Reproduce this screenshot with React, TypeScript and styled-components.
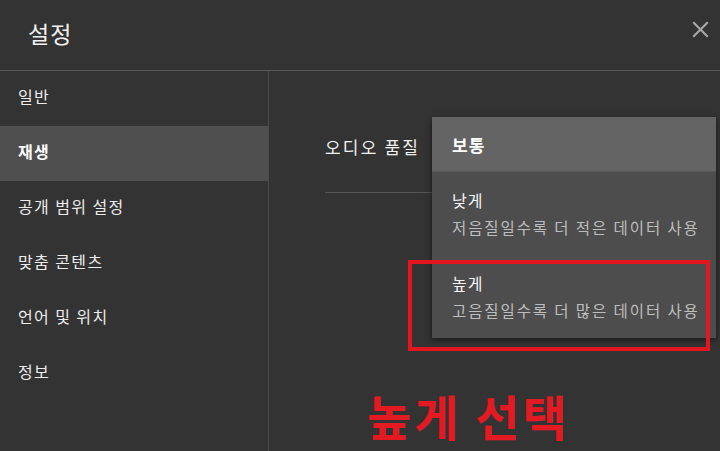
import React from "react";
import styled, { createGlobalStyle } from "styled-components";

const Global = createGlobalStyle`
  html, body { margin: 0; padding: 0; background: #333333; }
  body { font-family: "Noto Sans CJK KR", "Noto Sans", sans-serif; color: #fff; }
  #root { width: 720px; height: 451px; overflow: hidden; }
`;

const Page = styled.div`
  width: 720px;
  height: 451px;
  background: #333333;
  display: flex;
  flex-direction: column;
`;

const Header = styled.header`
  height: 70px;
  flex: none;
  display: flex;
  align-items: center;
  justify-content: space-between;
  padding: 0 10px 0 28px;
  border-bottom: 1px solid #585858;
  box-sizing: content-box;
`;

const Title = styled.h1`
  margin: 0;
  font-size: 23px;
  font-weight: 400;
  color: #f2f2f2;
  letter-spacing: 1px;
  padding-bottom: 5px;
`;

const CloseButton = styled.button`
  background: none;
  border: none;
  padding: 0;
  width: 20px;
  height: 20px;
  margin-top: -12px;
  display: flex;
  align-items: center;
  justify-content: center;
`;

const Body = styled.div`
  flex: 1;
  display: flex;
`;

const Sidebar = styled.nav`
  width: 268px;
  flex: none;
  border-right: 1px solid #4a4a4a;
  display: flex;
  flex-direction: column;
`;

const NavItem = styled.div<{ $active?: boolean }>`
  height: 55px;
  display: flex;
  align-items: center;
  padding: 0 0 5px 18px;
  box-sizing: border-box;
  font-size: 16px;
  font-weight: ${(p) => (p.$active ? 700 : 400)};
  color: ${(p) => (p.$active ? "#ffffff" : "#ececec")};
  background: ${(p) => (p.$active ? "#4f4f4f" : "transparent")};
  letter-spacing: 1.4px;
`;

const Content = styled.section`
  flex: 1;
  position: relative;
  padding: 33px 20px 0 56px;
`;

const Row = styled.div`
  height: 89px;
  display: flex;
  align-items: center;
  border-bottom: 1px solid #555555;
  box-sizing: border-box;
`;

const Label = styled.span`
  font-size: 17px;
  color: #f0f0f0;
  letter-spacing: 2.2px;
  padding-bottom: 3px;
`;

const Menu = styled.div`
  position: absolute;
  left: 163px;
  top: 46px;
  width: 284px;
  background: #4d4d4d;
  box-shadow: 0 2px 6px rgba(0, 0, 0, 0.55);
`;

const MenuHeader = styled.div`
  height: 55px;
  display: flex;
  align-items: center;
  padding-left: 20px;
  background: #646464;
  border-bottom: 1px solid #5a5a5a;
  box-sizing: border-box;
  font-size: 17px;
  font-weight: 700;
  color: #ffffff;
  letter-spacing: 1px;
`;

const MenuItem = styled.div`
  padding: 16px 20px;
  display: flex;
  flex-direction: column;
  gap: 3px;
`;

const ItemTitle = styled.span`
  font-size: 16px;
  line-height: 24px;
  color: #f4f4f4;
  letter-spacing: 1px;
`;

const ItemSub = styled.span`
  font-size: 15.5px;
  line-height: 24px;
  color: #bdbdbd;
  letter-spacing: 1.9px;
  white-space: nowrap;
`;

const Highlight = styled.div`
  position: absolute;
  left: 139px;
  top: 189px;
  width: 302px;
  height: 91px;
  border: 4px solid #e3161f;
  box-sizing: border-box;
  pointer-events: none;
`;

const Annotation = styled.div`
  position: absolute;
  left: 98px;
  top: 313px;
  font-size: 48px;
  line-height: 62px;
  font-weight: 700;
  color: #e31a22;
  letter-spacing: 3px;
  white-space: nowrap;
`;

const navItems = ["일반", "재생", "공개 범위 설정", "맞춤 콘텐츠", "언어 및 위치", "정보"];

export default function App() {
  return (
    <>
      <Global />
      <Page>
        <Header>
          <Title>설정</Title>
          <CloseButton aria-label="닫기">
            <svg width="17" height="17" viewBox="0 0 17 17">
              <path d="M2 2 L15 15 M15 2 L2 15" stroke="#a6a6a6" strokeWidth="2.2" strokeLinecap="square" />
            </svg>
          </CloseButton>
        </Header>
        <Body>
          <Sidebar>
            {navItems.map((n) => (
              <NavItem key={n} $active={n === "재생"}>
                {n}
              </NavItem>
            ))}
          </Sidebar>
          <Content>
            <Row>
              <Label>오디오 품질</Label>
            </Row>
            <Menu>
              <MenuHeader>보통</MenuHeader>
              <MenuItem>
                <ItemTitle>낮게</ItemTitle>
                <ItemSub>저음질일수록 더 적은 데이터 사용</ItemSub>
              </MenuItem>
              <MenuItem>
                <ItemTitle>높게</ItemTitle>
                <ItemSub>고음질일수록 더 많은 데이터 사용</ItemSub>
              </MenuItem>
            </Menu>
            <Highlight />
            <Annotation>높게 선택</Annotation>
          </Content>
        </Body>
      </Page>
    </>
  );
}
